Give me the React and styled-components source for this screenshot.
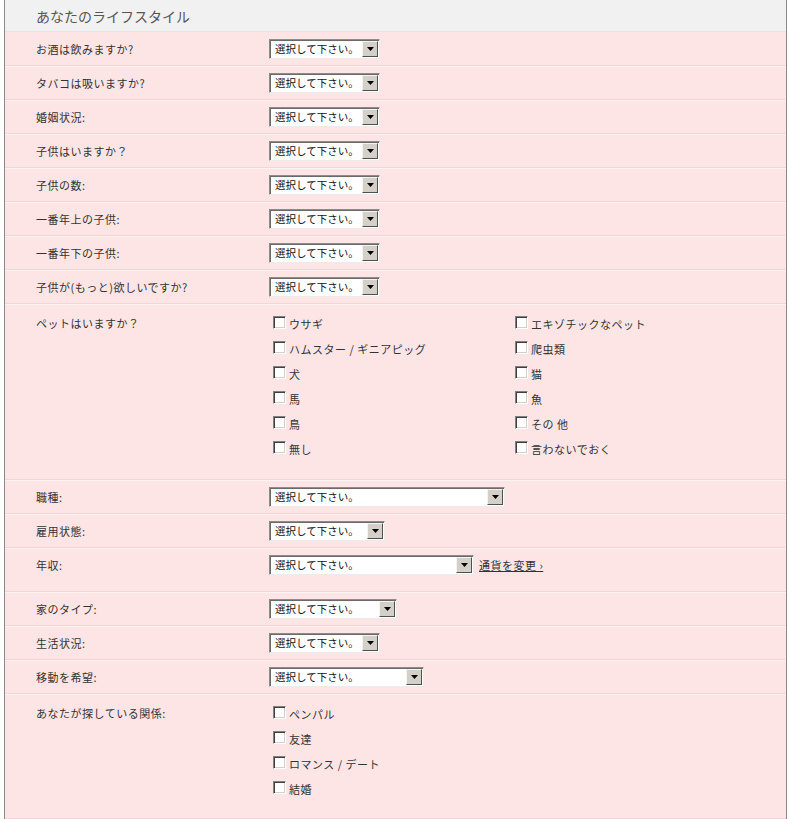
import React from 'react';
import styled, { createGlobalStyle } from 'styled-components';

const GlobalStyle = createGlobalStyle`
  body {
    margin: 0;
    background: #fff;
    font-family: 'Noto Sans CJK JP', 'DejaVu Sans', sans-serif;
  }
`;

const Panel = styled.div`
  margin-left: 4px;
  width: 781px;
  border-left: 1px solid #8a8a8a;
  border-right: 1px solid #8a8a8a;
  background: #fde5e5;
  min-height: 819px;
`;

const Header = styled.div`
  height: 31px;
  background: #f1f1f1;
  border-bottom: 1px solid #e4e4e4;
  display: flex;
  align-items: center;
  padding-left: 31px;
  font-size: 14px;
  color: #555;
`;

const Row = styled.div`
  display: grid;
  grid-template-columns: 233px 1fr;
  padding-left: 31px;
  min-height: ${(p) => p.h || 34}px;
  align-items: ${(p) => (p.top ? 'start' : 'center')};
  padding-top: ${(p) => (p.top ? 11 : 0)}px;
  padding-bottom: ${(p) => p.pb || 0}px;
  box-sizing: border-box;
  border-bottom: 1px solid #f2d6d6;
  box-shadow: 0 1px 0 #fff2f2;
`;

const Label = styled.div`
  font-size: 11px;
  color: #333;
  letter-spacing: 0.5px;
`;

const Controls = styled.div`
  display: flex;
  align-items: center;
  gap: 5px;
`;

const SelectBox = styled.div`
  width: ${(p) => p.w}px;
  height: 20px;
  box-sizing: border-box;
  display: flex;
  align-items: center;
  background: #fff;
  border-top: 1px solid #8c8c8c;
  border-left: 1px solid #8c8c8c;
  border-right: 1px solid #ececec;
  border-bottom: 1px solid #ececec;
  box-shadow: inset 1px 1px 0 #6a6a6a;
  padding: 1px 1px 1px 2px;
`;

const SelectText = styled.span`
  flex: 1;
  font-size: 10.5px;
  color: #111;
  padding-left: 3px;
  white-space: nowrap;
  overflow: hidden;
`;

const ArrowBtn = styled.span`
  width: 16px;
  height: 16px;
  flex-shrink: 0;
  box-sizing: border-box;
  background: #d4d0c8;
  border-top: 1px solid #f4f4f4;
  border-left: 1px solid #f4f4f4;
  border-right: 1px solid #505050;
  border-bottom: 1px solid #505050;
  display: flex;
  align-items: center;
  justify-content: center;
`;

const Link = styled.a`
  font-size: 11px;
  color: #333;
  text-decoration: underline;
  letter-spacing: 0.5px;
`;

const CheckGrid = styled.div`
  display: grid;
  grid-template-columns: ${(p) => (p.cols === 2 ? '242px 242px' : '242px')};
  grid-auto-rows: 25px;
  padding-left: 4px;
`;

const CheckItem = styled.label`
  display: flex;
  align-items: center;
  gap: 3px;
  font-size: 11px;
  color: #333;
  height: 18px;
  letter-spacing: 0.5px;
`;

const Box = styled.span`
  width: 13px;
  height: 13px;
  box-sizing: border-box;
  background: #fff;
  border-top: 1px solid #808080;
  border-left: 1px solid #808080;
  border-right: 1px solid #fff;
  border-bottom: 1px solid #fff;
  box-shadow: inset 1px 1px 0 #404040, inset -1px -1px 0 #d4d0c8;
  margin-bottom: 4px;
`;

const Select = ({ w = 111 }) => (
  <SelectBox w={w}>
    <SelectText>選択して下さい。</SelectText>
    <ArrowBtn>
      <svg width="7" height="4" viewBox="0 0 7 4">
        <path d="M0 0h7L3.5 4z" fill="#000" />
      </svg>
    </ArrowBtn>
  </SelectBox>
);

const Check = ({ text }) => (
  <CheckItem>
    <Box />
    {text}
  </CheckItem>
);

const basic = [
  'お酒は飲みますか?',
  'タバコは吸いますか?',
  '婚姻状況:',
  '子供はいますか？',
  '子供の数:',
  '一番年上の子供:',
  '一番年下の子供:',
  '子供が(もっと)欲しいですか?',
];

const pets = [
  'ウサギ',
  'エキゾチックなペット',
  'ハムスター / ギニアピッグ',
  '爬虫類',
  '犬',
  '猫',
  '馬',
  '魚',
  '鳥',
  'その 他',
  '無し',
  '言わないでおく',
];

const relations = ['ペンパル', '友達', 'ロマンス / デート', '結婚'];

const App = () => (
  <>
    <GlobalStyle />
    <Panel>
      <Header>あなたのライフスタイル</Header>
      {basic.map((l) => (
        <Row key={l}>
          <Label>{l}</Label>
          <Controls>
            <Select />
          </Controls>
        </Row>
      ))}
      <Row h={176} top>
        <Label>ペットはいますか？</Label>
        <CheckGrid cols={2}>
          {pets.map((p) => (
            <Check key={p} text={p} />
          ))}
        </CheckGrid>
      </Row>
      <Row>
        <Label>職種:</Label>
        <Controls>
          <Select w={236} />
        </Controls>
      </Row>
      <Row>
        <Label>雇用状態:</Label>
        <Controls>
          <Select w={116} />
        </Controls>
      </Row>
      <Row h={44} pb={10}>
        <Label>年収:</Label>
        <Controls>
          <Select w={205} />
          <Link>通貨を変更 ›</Link>
        </Controls>
      </Row>
      <Row>
        <Label>家のタイプ:</Label>
        <Controls>
          <Select w={128} />
        </Controls>
      </Row>
      <Row>
        <Label>生活状況:</Label>
        <Controls>
          <Select />
        </Controls>
      </Row>
      <Row>
        <Label>移動を希望:</Label>
        <Controls>
          <Select w={155} />
        </Controls>
      </Row>
      <Row h={125} top>
        <Label>あなたが探している関係:</Label>
        <CheckGrid>
          {relations.map((r) => (
            <Check key={r} text={r} />
          ))}
        </CheckGrid>
      </Row>
    </Panel>
  </>
);

export default App;
